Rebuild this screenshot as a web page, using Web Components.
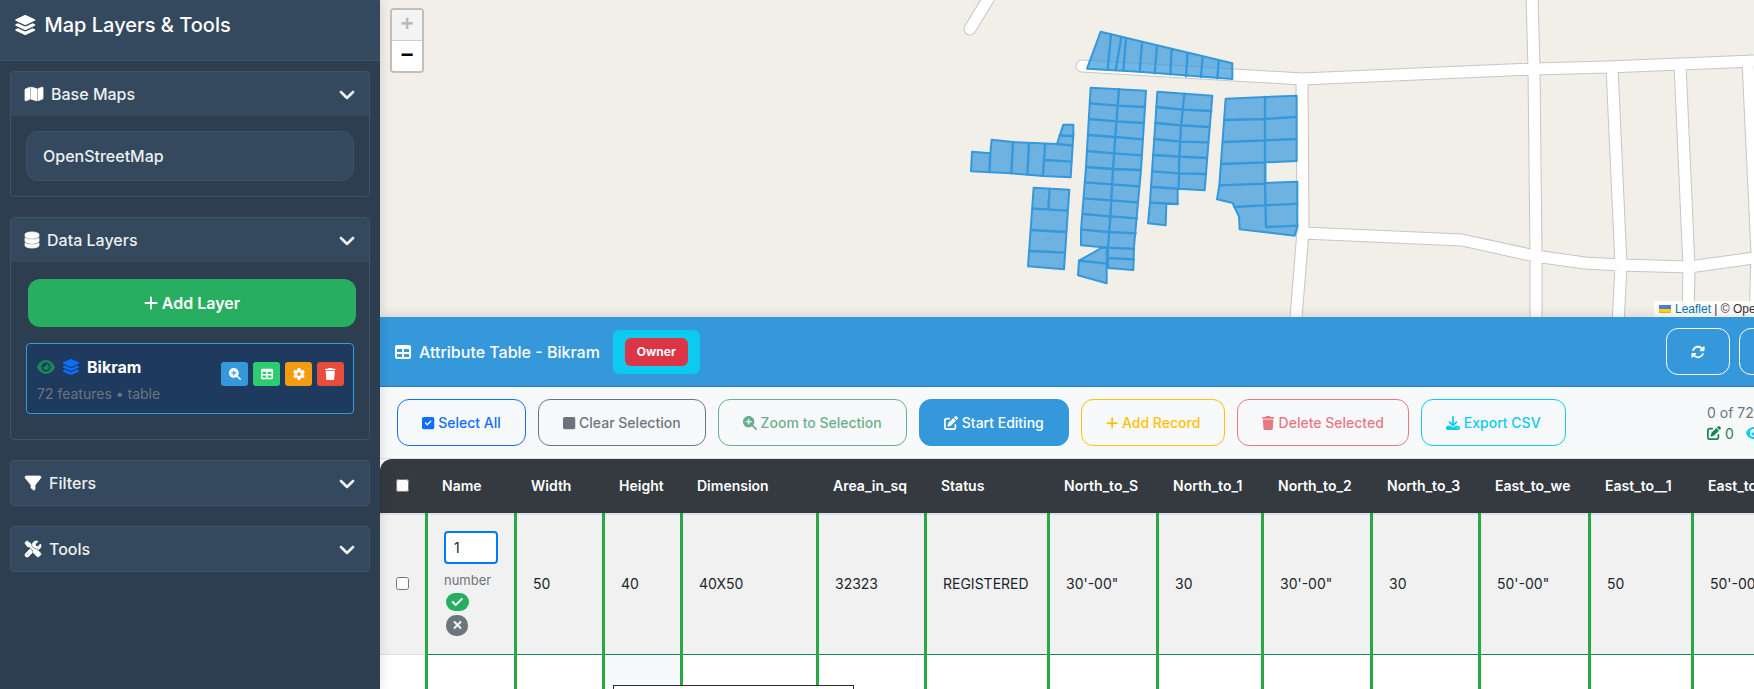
<!DOCTYPE html>
<html lang="en">
<head>
<meta charset="utf-8">
<title>Map Layers &amp; Tools</title>
<style>
  html, body { margin: 0; height: 100%; }
  body { font-family: Inter, "Liberation Sans", sans-serif; font-size: 16px; line-height: 24px; color: #212529; overflow: hidden; background: #fff; }
</style>
</head>
<body>
<gis-app></gis-app>

<script>
const ICONS = {
  layers: [576, 'M264.5 5.2c14.9-6.9 32.1-6.9 47 0l218.6 101c8.5 3.9 13.9 12.4 13.9 21.8s-5.4 17.9-13.9 21.8l-218.6 101c-14.9 6.9-32.1 6.9-47 0L45.9 149.8C37.4 145.8 32 137.3 32 128s5.4-17.9 13.9-21.8L264.5 5.2zM476.9 209.6l53.2 24.6c8.5 3.9 13.9 12.4 13.9 21.8s-5.4 17.9-13.9 21.8l-218.6 101c-14.9 6.9-32.1 6.9-47 0L45.9 277.8C37.4 273.8 32 265.3 32 256s5.4-17.9 13.9-21.8l53.2-24.6 152 70.2c23.4 10.8 50.4 10.8 73.8 0l152-70.2zm-152 198.2l152-70.2 53.2 24.6c8.5 3.9 13.9 12.4 13.9 21.8s-5.4 17.9-13.9 21.8l-218.6 101c-14.9 6.9-32.1 6.9-47 0L45.9 405.8C37.4 401.8 32 393.3 32 384s5.4-17.9 13.9-21.8l53.2-24.6 152 70.2c23.4 10.8 50.4 10.8 73.8 0z'],
  chevron: [512, 'M233.4 406.6c12.5 12.5 32.8 12.5 45.3 0l192-192c12.5-12.5 12.5-32.8 0-45.3s-32.8-12.5-45.3 0L256 338.7 86.6 169.4c-12.5-12.5-32.8-12.5-45.3 0s-12.5 32.8 0 45.3l192 192z'],
  database: [448, 'M448 80v48c0 44.2-100.3 80-224 80S0 172.2 0 128V80C0 35.8 100.3 0 224 0S448 35.8 448 80zM393.2 214.7c20.8-7.4 39.9-16.9 54.8-28.6V288c0 44.2-100.3 80-224 80S0 332.2 0 288V186.1c14.9 11.8 34 21.2 54.8 28.6C99.7 230.7 159.5 240 224 240s124.3-9.3 169.2-25.3zM0 346.1c14.9 11.8 34 21.2 54.8 28.6C99.7 390.7 159.5 400 224 400s124.3-9.3 169.2-25.3c20.8-7.4 39.9-16.9 54.8-28.6V432c0 44.2-100.3 80-224 80S0 476.2 0 432V346.1z'],
  map: [576, 'M384 476.1L192 421.2V35.9L384 90.8V476.1zm32-1.2V88.4L543.1 37.5c15.8-6.3 32.9 5.3 32.9 22.3V394.6c0 9.8-6 18.6-15.1 22.3L416 474.8zM15.1 95.1L160 37.2V423.6L32.9 474.5C17.1 480.8 0 469.2 0 452.2V117.4c0-9.8 6-18.6 15.1-22.3z'],
  filter: [512, 'M3.9 54.9C10.5 40.9 24.5 32 40 32H472c15.5 0 29.5 8.9 36.1 22.9s4.6 30.5-5.2 42.5L320 320.9V448c0 12.1-6.8 23.2-17.7 28.6s-23.8 4.3-33.5-3l-64-48c-8.1-6-12.8-15.5-12.8-25.6V320.9L9 97.3C-.7 85.4-2.8 68.8 3.9 54.9z'],
  tools: [512, 'M78.6 5C69.1-2.4 55.6-1.5 47 7L7 47c-8.5 8.5-9.4 22-2.1 31.6l80 104c4.5 5.9 11.6 9.4 19 9.4h54.1l109 109c-14.7 29-10 65.4 14.3 89.6l112 112c12.5 12.5 32.8 12.5 45.3 0l64-64c12.5-12.5 12.5-32.8 0-45.3l-112-112c-24.2-24.2-60.6-29-89.6-14.3l-109-109V104c0-7.5-3.5-14.5-9.4-19L78.6 5zM19.9 396.1C7.2 408.8 0 426.1 0 444.1C0 481.6 30.4 512 67.9 512c18 0 35.3-7.2 48-19.9L233.7 374.3c-7.8-20.9-9-43.6-3.6-65.1l-61.7-61.7L19.9 396.1zM512 144c0-10.5-1.1-20.7-3.2-30.5c-2.4-11.2-16.1-14.1-24.2-6l-63.9 63.9c-3 3-7.1 4.7-11.3 4.7H352c-8.8 0-16-7.2-16-16V102.6c0-4.2 1.7-8.3 4.7-11.3l63.9-63.9c8.1-8.1 5.2-21.8-6-24.2C388.7 1.1 378.5 0 368 0C288.5 0 224 64.5 224 144l0 .8 85.3 85.3c36-9.1 75.8 .5 104 28.7L429 274.5c49-23 83-72.8 83-130.5zM56 432a24 24 0 1 1 48 0 24 24 0 1 1 -48 0z'],
  plus: [448, 'M256 80c0-17.7-14.3-32-32-32s-32 14.3-32 32V224H48c-17.7 0-32 14.3-32 32s14.3 32 32 32H192V432c0 17.7 14.3 32 32 32s32-14.3 32-32V288H400c17.7 0 32-14.3 32-32s-14.3-32-32-32H256V80z'],
  eye: [576, 'M288 32c-80.8 0-145.5 36.8-192.6 80.6C48.6 156 17.3 208 2.5 243.7c-3.3 7.9-3.3 16.7 0 24.6C17.3 304 48.6 356 95.4 399.4C142.5 443.2 207.2 480 288 480s145.5-36.8 192.6-80.6c46.8-43.5 78.1-95.4 93-131.1c3.3-7.9 3.3-16.7 0-24.6c-14.9-35.7-46.2-87.7-93-131.1C433.5 68.8 368.8 32 288 32zM144 256a144 144 0 1 1 288 0 144 144 0 1 1 -288 0zm144-64c0 35.3-28.7 64-64 64c-7.1 0-13.9-1.2-20.3-3.3c-5.5-1.8-11.9 1.6-11.7 7.4c.3 6.9 1.3 13.8 3.2 20.7c13.7 51.2 66.4 81.6 117.6 67.9s81.6-66.4 67.9-117.6c-11.1-41.5-47.8-69.4-88.6-71.1c-5.8-.2-9.2 6.1-7.4 11.7c2.1 6.4 3.3 13.2 3.3 20.3z'],
  zoom: [512, 'M416 208c0 45.9-14.9 88.3-40 122.7L502.6 457.4c12.5 12.5 12.5 32.8 0 45.3s-32.8 12.5-45.3 0L330.7 376c-34.4 25.2-76.8 40-122.7 40C93.1 416 0 322.9 0 208S93.1 0 208 0S416 93.1 416 208zM184 296c0 13.3 10.7 24 24 24s24-10.7 24-24V232h64c13.3 0 24-10.7 24-24s-10.7-24-24-24H232V120c0-13.3-10.7-24-24-24s-24 10.7-24 24v64H120c-13.3 0-24 10.7-24 24s10.7 24 24 24h64v64z'],
  table: [512, 'M64 256V160H224v96H64zm0 64H224v96H64V320zm224 96V320H448v96H288zM448 256H288V160H448v96zM64 32C28.7 32 0 60.7 0 96V416c0 35.3 28.7 64 64 64H448c35.3 0 64-28.7 64-64V96c0-35.3-28.7-64-64-64H64z'],
  gear: [512, 'M495.9 166.6c3.2 8.7 .5 18.4-6.4 24.6l-43.3 39.4c1.1 8.3 1.7 16.8 1.7 25.4s-.6 17.1-1.7 25.4l43.3 39.4c6.9 6.2 9.6 15.9 6.4 24.6c-4.4 11.9-9.7 23.3-15.8 34.3l-4.7 8.1c-6.6 11-14 21.4-22.1 31.2c-5.9 7.2-15.7 9.6-24.5 6.8l-55.7-17.7c-13.4 10.3-28.2 18.9-44 25.4l-12.5 57.1c-2 9.1-9 16.3-18.2 17.8c-13.8 2.3-28 3.5-42.5 3.5s-28.7-1.2-42.5-3.5c-9.2-1.5-16.2-8.7-18.2-17.8l-12.5-57.1c-15.8-6.5-30.6-15.1-44-25.4L83.1 425.9c-8.8 2.8-18.6 .3-24.5-6.8c-8.1-9.8-15.5-20.2-22.1-31.2l-4.7-8.1c-6.1-11-11.4-22.4-15.8-34.3c-3.2-8.7-.5-18.4 6.4-24.6l43.3-39.4C64.6 273.1 64 264.6 64 256s.6-17.1 1.7-25.4L22.4 191.2c-6.9-6.2-9.6-15.9-6.4-24.6c4.4-11.9 9.7-23.3 15.8-34.3l4.7-8.1c6.6-11 14-21.4 22.1-31.2c5.9-7.2 15.7-9.6 24.5-6.8l55.7 17.7c13.4-10.3 28.2-18.9 44-25.4l12.5-57.1c2-9.1 9-16.3 18.2-17.8C227.3 1.2 241.5 0 256 0s28.7 1.2 42.5 3.5c9.2 1.5 16.2 8.7 18.2 17.8l12.5 57.1c15.8 6.5 30.6 15.1 44 25.4l55.7-17.7c8.8-2.8 18.6-.3 24.5 6.8c8.1 9.8 15.5 20.2 22.1 31.2l4.7 8.1c6.1 11 11.4 22.4 15.8 34.3zM256 336a80 80 0 1 0 0-160 80 80 0 1 0 0 160z'],
  trash: [448, 'M135.2 17.7L128 32H32C14.3 32 0 46.3 0 64S14.3 96 32 96H416c17.7 0 32-14.3 32-32s-14.3-32-32-32H320l-7.2-14.3C307.4 6.8 296.3 0 284.2 0H163.8c-12.1 0-23.2 6.8-28.6 17.7zM416 128H32L53.2 467c1.6 25.3 22.6 45 47.9 45H346.9c25.3 0 46.3-19.7 47.9-45L416 128z'],
  checkbox: [448, 'M64 32C28.7 32 0 60.7 0 96V416c0 35.3 28.7 64 64 64H384c35.3 0 64-28.7 64-64V96c0-35.3-28.7-64-64-64H64zM337 209L209 337c-9.4 9.4-24.6 9.4-33.9 0l-64-64c-9.4-9.4-9.4-24.6 0-33.9s24.6-9.4 33.9 0l47 47L303 175c9.4-9.4 24.6-9.4 33.9 0s9.4 24.6 0 33.9z'],
  square: [448, 'M0 96C0 60.7 28.7 32 64 32H384c35.3 0 64 28.7 64 64V416c0 35.3-28.7 64-64 64H64c-35.3 0-64-28.7-64-64V96z'],
  edit: [512, 'M471.6 21.7c-21.9-21.9-57.3-21.9-79.2 0L362.3 51.7l97.9 97.9 30.1-30.1c21.9-21.9 21.9-57.3 0-79.2L471.6 21.7zm-299.2 220c-6.1 6.1-10.8 13.6-13.5 21.9l-29.6 88.8c-2.9 8.6-.6 18.1 5.8 24.6s15.9 8.7 24.6 5.8l88.8-29.6c8.2-2.7 15.7-7.4 21.9-13.5L437.7 172.3 339.7 74.3 172.4 241.7zM96 64C43 64 0 107 0 160V416c0 53 43 96 96 96H352c53 0 96-43 96-96V320c0-17.7-14.3-32-32-32s-32 14.3-32 32v96c0 17.7-14.3 32-32 32H96c-17.7 0-32-14.3-32-32V160c0-17.7 14.3-32 32-32h96c17.7 0 32-14.3 32-32s-14.3-32-32-32H96z'],
  download: [512, 'M288 32c0-17.7-14.3-32-32-32s-32 14.3-32 32V274.7l-73.4-73.4c-12.5-12.5-32.8-12.5-45.3 0s-12.5 32.8 0 45.3l128 128c12.5 12.5 32.8 12.5 45.3 0l128-128c12.5-12.5 12.5-32.8 0-45.3s-32.8-12.5-45.3 0L288 274.7V32zM64 352c-35.3 0-64 28.7-64 64v32c0 35.3 28.7 64 64 64H448c35.3 0 64-28.7 64-64V416c0-35.3-28.7-64-64-64H346.5l-45.3 45.3c-25 25-65.5 25-90.5 0L165.5 352H64zm368 56a24 24 0 1 1 0 48 24 24 0 1 1 0-48z'],
  sync: [512, 'M142.9 142.9c62.2-62.2 162.7-62.5 225.3-1L327 183c-6.9 6.9-8.9 17.2-5.2 26.2s12.5 14.8 22.2 14.8H463.5c0 0 0 0 0 0H472c13.3 0 24-10.7 24-24V72c0-9.7-5.8-18.5-14.8-22.2s-19.3-1.7-26.2 5.2L413.4 96.6c-87.6-86.5-228.7-86.2-315.8 1C73.2 122 55.6 150.7 44.8 181.4c-5.9 16.7 2.9 34.9 19.5 40.8s34.9-2.9 40.8-19.5c7.7-21.8 20.2-42.3 37.8-59.8zM16 312v7.6 .7V440c0 9.7 5.8 18.5 14.8 22.2s19.3 1.7 26.2-5.2l41.6-41.6c87.6 86.5 228.7 86.2 315.8-1c24.4-24.4 42.1-53.1 52.9-83.7c5.9-16.7-2.9-34.9-19.5-40.8s-34.9 2.9-40.8 19.5c-7.7 21.8-20.2 42.3-37.8 59.8c-62.2 62.2-162.7 62.5-225.3 1L185 329c6.9-6.9 8.9-17.2 5.2-26.2s-12.5-14.8-22.2-14.8H48.4h-.7H40c-13.3 0-24 10.7-24 24z'],
  check: [448, 'M438.6 105.4c12.5 12.5 12.5 32.8 0 45.3l-256 256c-12.5 12.5-32.8 12.5-45.3 0l-128-128c-12.5-12.5-12.5-32.8 0-45.3s32.8-12.5 45.3 0L160 338.7 393.4 105.4c12.5-12.5 32.8-12.5 45.3 0z'],
  times: [384, 'M342.6 150.6c12.5-12.5 12.5-32.8 0-45.3s-32.8-12.5-45.3 0L192 210.7 86.6 105.4c-12.5-12.5-32.8-12.5-45.3 0s-12.5 32.8 0 45.3L146.7 256 41.4 361.4c-12.5 12.5-12.5 32.8 0 45.3s32.8 12.5 45.3 0L192 301.3 297.4 406.6c12.5 12.5 32.8 12.5 45.3 0s12.5-32.8 0-45.3L237.3 256 342.6 150.6z']
};

/* Registers an element whose open shadow root is filled from render(host). */
function element(name, render) {
  customElements.define(name, class extends HTMLElement {
    connectedCallback() {
      if (this.shadowRoot) return;
      const template = document.createElement('template');
      template.innerHTML = render(this);
      this.attachShadow({ mode: 'open' }).append(template.content.cloneNode(true));
    }
  });
}

/* Icon, as tall as the current font size; "bold" thickens its strokes */
element('ui-icon', host => {
  const [w, d] = ICONS[host.getAttribute('name')];
  return `<style>
    :host { display: inline-flex; flex: none; }
    svg { display: block; height: 1em; width: auto; overflow: visible; fill: currentColor; }
    :host([bold]) path { stroke: currentColor; stroke-width: 24; }
  </style><svg viewBox="0 0 ${w} 512" aria-hidden="true"><path d="${d}"/></svg>`;
});

element('side-section', host => `<style>
    :host { display: block; border: 1px solid #415467; border-radius: 4px; overflow: hidden; }
    button { display: flex; align-items: center; gap: 8px; width: 100%; height: 44px; padding: 0 14px; border: 0;
      background: #34495e; color: #fff; font: 500 16px/24px Inter, sans-serif; text-align: left; cursor: pointer; }
    span { flex: 1; color: #ecf0f1; }
  </style>
  <button type="button" aria-expanded="${host.hasAttribute('open')}"><ui-icon name="${host.getAttribute('icon')}" bold></ui-icon><span>${host.getAttribute('label')}</span><ui-icon name="chevron" bold></ui-icon></button>
  <slot></slot>`);

/* One layer of the data-layer list */
element('layer-card', host => `<style>
    :host { display: flex; align-items: center; justify-content: space-between; padding: 11px 9px 6px 10px; background: #1e3a5f; border: 1px solid #3498db; border-radius: 4px; }
    .name { display: flex; align-items: center; gap: 7px; color: #fff; font-weight: 700; }
    .eye { color: #198754; } .stack { color: #0d6efd; }
    .meta { padding-top: 2px; font-size: 14px; line-height: 26px; color: #6c757d; }
    .actions { display: flex; gap: 5px; margin-bottom: 14px; }
    button { display: flex; align-items: center; justify-content: center; width: 27px; height: 24px; padding: 0; border: 0; border-radius: 3px; color: #fff; font-size: 12px; cursor: pointer; }
    .zoom { background: #3498db; } .table { background: #2ecc71; } .gear { background: #f39c12; } .trash { background: #e74c3c; }
  </style>
  <div>
    <div class="name"><ui-icon class="eye" name="eye"></ui-icon><ui-icon class="stack" name="layers"></ui-icon><slot></slot></div>
    <div class="meta">${host.getAttribute('meta')}</div>
  </div>
  <div class="actions">
    <button class="zoom" aria-label="Zoom to layer"><ui-icon name="zoom"></ui-icon></button>
    <button class="table" aria-label="Open table"><ui-icon name="table"></ui-icon></button>
    <button class="gear" aria-label="Layer settings"><ui-icon name="gear"></ui-icon></button>
    <button class="trash" aria-label="Remove layer"><ui-icon name="trash"></ui-icon></button>
  </div>`);

element('side-bar', () => `<style>
    :host { display: flex; flex-direction: column; flex: none; width: 380px; background: #2c3e50; box-shadow: 2px 0 10px rgba(0,0,0,.1); position: relative; z-index: 2; }
    header { background: #34495e; border-bottom: 1px solid #415467; padding: 13px 14px 23px; color: #fff; }
    h1 { display: flex; align-items: center; gap: 8px; margin: 0; font-size: 20px; line-height: 24px; font-weight: 500; }
    main { display: flex; flex-direction: column; gap: 20px; padding: 10px; }
    .body { padding: 15px; }
    .data { padding: 17px 15px 25px; }
    .base { display: block; width: 100%; height: 50px; padding: 0 16px; border: 1px solid #415467; border-radius: 12px; background: #34495e; color: #ecf0f1; font: 500 16px/24px Inter, sans-serif; text-align: left; }
    .add { display: flex; align-items: center; justify-content: center; gap: 4px; width: 328px; height: 48px; margin: 0 0 16px 2px; padding: 0; border: 0; border-radius: 12px; background: #27ae60; color: #fff; font: 600 16px/24px Inter, sans-serif; }
  </style>
  <header><h1><ui-icon name="layers"></ui-icon>Map Layers &amp; Tools</h1></header>
  <main>
    <side-section icon="map" label="Base Maps" open><div class="body"><button class="base">OpenStreetMap</button></div></side-section>
    <side-section icon="database" label="Data Layers" open><div class="data"><button class="add"><ui-icon name="plus"></ui-icon>Add Layer</button><layer-card meta="72 features • table">Bikram</layer-card></div></side-section>
    <side-section icon="filter" label="Filters"></side-section>
    <side-section icon="tools" label="Tools"></side-section>
  </main>`);

element('map-view', () => {
  const roads = [
    'M970 29L1007-32', 'M1082 66L1302 79L1534 69L1607 67L1681 64L1754 61L1930 56',
    'M1532-5L1534 69L1536 255V325', 'M1302 79L1303 231L1295 330',
    'M1303 233L1462 240L1535 256L1585 263L1621 265L1689 267L1754 258L1900 236',
    'M1612 67L1621 265L1618 325', 'M1680 64L1689 267L1688 325', 'M1748 61L1757 253L1755 325'
  ].join('');
  return `<style>
    :host { display: block; position: relative; overflow: hidden; background: #f2efe9; height: 317px; font: 12px/16px "Liberation Sans", Arial, sans-serif; }
    .canvas { display: block; }
    .road { fill: none; stroke-linecap: round; stroke-linejoin: round; }
    .casing { stroke: #c6c6c6; stroke-width: 13; } .core { stroke: #fff; stroke-width: 11; }
    .plots { stroke: #3498db; stroke-width: 6; stroke-linejoin: round; stroke-linecap: round; }
    .plot { fill: #3498db; fill-opacity: .7; } .line { fill: none; stroke-width: 7; }
    .zoom { position: absolute; left: 10px; top: 8px; border: 2px solid rgba(0,0,0,.2); border-radius: 4px; background-clip: padding-box; }
    .zoom button { display: block; width: 30px; height: 30px; padding: 0; border: 0; background: #fff; color: #000; font: bold 22px/32px "Liberation Mono", monospace; }
    .zoom button:first-child { height: 31px; border-bottom: 1px solid #ccc; border-radius: 2px 2px 0 0; background: #f4f4f4; color: #bbb; }
    .zoom button:last-child { border-radius: 0 0 2px 2px; }
    .credit { position: absolute; right: 0; bottom: 0; width: 256px; padding: 0 5px; white-space: nowrap; background: rgba(255,255,255,.8); color: #333; }
    a { color: #0078a8; text-decoration: none; }
    .flag { width: 12px; height: 8px; margin-right: 4px; }
  </style>
  <svg class="canvas" width="1540" height="317" viewBox="380 0 1540 317" role="img" aria-label="Plot map">
    <path class="road casing" d="${roads}"/><path class="road core" d="${roads}"/>
    <g class="plots" transform="translate(950 0) scale(.33333)">
      <path class="plot" d="M452 95L527 113L847 190V237L568 215L411 206z"/>
      <path class="line" d="M483 103L473 208M514 111L497 210M528 115L520 211M576 127L569 215M621 138L614 220M665 148L661 223M713 160L708 229M758 170L753 231M806 183L802 235"/>
      <path class="plot" d="M422 263L588 272L573 510L552 740L550 810L474 804V743L393 736V690L408 501z"/>
      <path class="line" d="M507 267L499 368L489 510L481 650L474 743M420 310L503 317L585 321M417 357L499 364L582 369M414 405L496 411L578 418M411 453L492 460L574 466M408 501L489 507L570 510M405 547L486 553L567 559M403 595L482 601L563 607M400 642L479 649L561 655M396 689L476 696L557 700M474 743L552 747M474 774L551 778"/>
      <path class="plot" d="M454 744L470 741V850L384 826L387 782z"/><path class="line" d="M387 782L470 791"/>
      <path class="plot" d="M622 275L787 287L772 470L764 571L683 566V612L649 612L647 676L594 670L600 608L603 560L616 369z"/>
      <path class="line" d="M703 282L693 380L688 470L686 567M619 321L699 329L784 333M616 369L695 376L777 381M613 417L691 425L774 427M609 465L689 470L771 474M606 514L687 520L768 522M603 561L683 566M600 608L683 612"/>
      <path class="plot" d="M827 296L1040 287V483L946 487V549L1042 545V682L1034 707L869 688L867 650L848 609L801 598L808 556z"/>
      <path class="line" d="M945 291V551L948 681M823 360L945 357L1039 351M820 426L945 421L1039 417M815 492L945 487M808 556L945 551M853 621L945 616L1042 611M948 681L1042 677"/>
      <path class="plot" d="M66 455L121 460L125 419L188 426L321 432L340 374H370V405L362 532L279 528L184 520L63 514z"/>
      <path class="line" d="M121 460L118 516M189 426L184 520M237 430L232 523M285 433L279 527M285 480L364 485M321 432L366 437M329 406L370 408"/>
      <path class="plot" d="M251 563L358 569L342 808L234 799z"/>
      <path class="line" d="M251 626L350 632M299 567L295 628M245 690L347 696M239 753L344 758"/>
    </g>
  </svg>
  <div class="zoom"><button disabled aria-label="Zoom in">+</button><button aria-label="Zoom out">−</button></div>
  <div class="credit"><a href="#"><svg class="flag" viewBox="0 0 12 8" aria-hidden="true"><path fill="#4C7BE1" d="M0 0h12v4H0z"/><path fill="#FFD500" d="M0 4h12v3H0z"/><path fill="#E0BC00" d="M0 7h12v1H0z"/></svg>Leaflet</a> | © OpenStreetMap</div>`;
});

/* Outlined toolbar button; the tone attribute sets its colour */
element('tool-button', host => {
  const off = host.hasAttribute('disabled');
  const solid = host.hasAttribute('solid');
  const tone = host.getAttribute('tone');
  const label = host.getAttribute('aria-label');
  return `<style>
    :host { display: block; flex: none; }
    button { display: flex; align-items: center; justify-content: center; gap: 4px; height: 47px; padding: 0 24px; border: 1px solid ${tone}; border-radius: 12px;
      background: ${solid ? tone : 'transparent'}; color: ${solid ? '#fff' : tone}; font: 500 14px/21px Inter, sans-serif; white-space: nowrap; opacity: ${off ? '.65' : '1'}; }
  </style><button ${off ? 'disabled' : ''} ${label ? `aria-label="${label}"` : ''}><ui-icon name="${host.getAttribute('icon')}"></ui-icon><slot></slot></button>`;
});

element('attribute-grid', () => {
  const cols = [['Name', 89], ['Width', 88, '50'], ['Height', 78, '40'], ['Dimension', 136, '40X50'], ['Area_in_sq', 108, '32323'], ['Status', 123, 'REGISTERED'],
    ['North_to_S', 109, '30\'-00"'], ['North_to_1', 105, '30'], ['North_to_2', 109, '30\'-00"'], ['North_to_3', 108, '30'],
    ['East_to_we', 110, '50\'-00"'], ['East_to__1', 103, '50'], ['East_to__2', 229, '50\'-00"']];
  return `<style>
    :host { display: block; flex: 1; min-height: 0; overflow: hidden; border-radius: 12px 12px 0 0; }
    table { width: 1540px; table-layout: fixed; border-collapse: separate; border-spacing: 0; font-size: 14px; line-height: 21px; }
    th, td { box-sizing: border-box; }
    th { height: 54px; padding: 0 0 2px 17px; background: #343a40; color: #fff; font-weight: 600; text-align: left; }
    td { height: 142px; padding: 0 0 2px 16px; border-left: 3px solid #28a745; vertical-align: middle; box-shadow: inset 0 -1px #198754; white-space: nowrap; }
    .first td { background: #f1f1f1; box-shadow: inset 0 2px #dee2e6, inset 0 -1px #198754; }
    td.pick { border-left: 0; box-shadow: inset 0 -1px #dee2e6; }
    .first td.pick { box-shadow: inset 0 2px #dee2e6, inset 0 -1px #dee2e6; }
    .pick { padding-left: 16px; }
    .pick input { display: block; width: 13px; height: 13px; margin: 0; }
    .edit { display: flex; flex-direction: column; align-items: flex-start; }
    .edit input { box-sizing: border-box; width: 54px; height: 33px; padding: 0 8px; border: 2px solid #007bff; border-radius: 4px; font: 14px/21px Inter, sans-serif; color: #212529; background: #fff; }
    .edit label { margin: 6px 0 3px; font-size: 13px; line-height: 20px; color: #6c757d; }
    .edit button { display: flex; align-items: center; justify-content: center; width: 23px; height: 18px; margin: 0 0 4px 2px; padding: 0; border: 0; border-radius: 10px; background: #27ae60; color: #fff; font-size: 12px; }
    .edit button.cancel { width: 22px; height: 21px; margin-bottom: 0; background: #6c757d; }
    td.over { position: relative; background: #f8f9fa; }
    .tip { position: absolute; left: 8px; top: 30px; z-index: 1; box-sizing: border-box; width: 241px; height: 24px; background: #fff; border: 1px solid #2b2b2b; }
  </style>
  <table>
    <colgroup><col style="width:45px">${cols.map(c => `<col style="width:${c[1]}px">`).join('')}</colgroup>
    <thead><tr><th class="pick"><input type="checkbox" aria-label="Select all rows"></th>${cols.map(c => `<th>${c[0]}</th>`).join('')}</tr></thead>
    <tbody>
      <tr class="first"><td class="pick"><input type="checkbox" aria-label="Select row"></td>
        <td><div class="edit"><input id="name" type="text" value="1"><label for="name">number</label><button aria-label="Save"><ui-icon name="check" bold></ui-icon></button><button class="cancel" aria-label="Cancel"><ui-icon name="times" bold></ui-icon></button></div></td>
        ${cols.slice(1).map(c => `<td>${c[2]}</td>`).join('')}</tr>
      <tr><td class="pick"></td>${cols.map(c => c[0] === 'Height' ? '<td class="over"><div class="tip"></div></td>' : '<td></td>').join('')}</tr>
    </tbody>
  </table>`;
});

element('attribute-panel', () => `<style>
    :host { display: flex; flex-direction: column; flex: 1; min-height: 0; position: relative; z-index: 1; background: #fff; box-shadow: 0 -2px 10px rgba(0,0,0,.1); }
    header { display: flex; align-items: center; justify-content: space-between; height: 69px; padding: 0 15px; background: #3498db; border-bottom: 1px solid #2980b9; color: #fff; }
    h2 { display: flex; align-items: center; gap: 8px; margin: 0; font-size: 16px; line-height: 24px; font-weight: 500; }
    .role { margin-left: 5px; padding: 8px 12px; border-radius: 6px; background: #0dcaf0; }
    .role span { display: block; padding: 0 12px; border-radius: 6px; background: #dc3545; font-size: 12px; line-height: 28px; font-weight: 700; }
    .actions { display: flex; gap: 9px; width: 239px; }
    .bar { display: flex; align-items: center; gap: 12px; height: 71px; padding: 0 17px; background: #f8f9fa; border-bottom: 1px solid #dee2e6; }
    .info { flex: none; width: 196px; margin-left: auto; font-size: 14px; line-height: 21px; color: #6c757d; white-space: nowrap; }
    .counts { display: flex; gap: 12px; }
    .counts span { display: flex; align-items: center; gap: 4px; }
    .edits { color: #198754; } .views { color: #0dcaf0; }
  </style>
  <header>
    <h2><ui-icon name="table"></ui-icon>Attribute Table - Bikram <div class="role"><span>Owner</span></div></h2>
    <div class="actions"><tool-button icon="sync" tone="#fff" aria-label="Refresh"></tool-button><tool-button icon="table" tone="#fff" aria-label="Columns"></tool-button><tool-button icon="times" tone="#fff" aria-label="Close"></tool-button></div>
  </header>
  <div class="bar">
    <tool-button icon="checkbox" tone="#0d6efd">Select All</tool-button>
    <tool-button icon="square" tone="#6c757d">Clear Selection</tool-button>
    <tool-button icon="zoom" tone="#198754" disabled>Zoom to Selection</tool-button>
    <tool-button icon="edit" tone="#3498db" solid>Start Editing</tool-button>
    <tool-button icon="plus" tone="#ffc107">Add Record</tool-button>
    <tool-button icon="trash" tone="#dc3545" disabled>Delete Selected</tool-button>
    <tool-button icon="download" tone="#0dcaf0">Export CSV</tool-button>
    <div class="info">0 of 72 selected<div class="counts"><span class="edits"><ui-icon name="edit"></ui-icon>0</span><span class="views"><ui-icon name="eye"></ui-icon></span></div></div>
  </div>
  <attribute-grid></attribute-grid>`);

element('gis-app', () => `<style>
    :host { display: flex; height: 100vh; overflow: hidden; }
    .work { display: flex; flex-direction: column; flex: 1 0 auto; min-width: 1540px; }
  </style>
  <side-bar></side-bar>
  <div class="work"><map-view></map-view><attribute-panel></attribute-panel></div>`);
</script>
</body>
</html>
